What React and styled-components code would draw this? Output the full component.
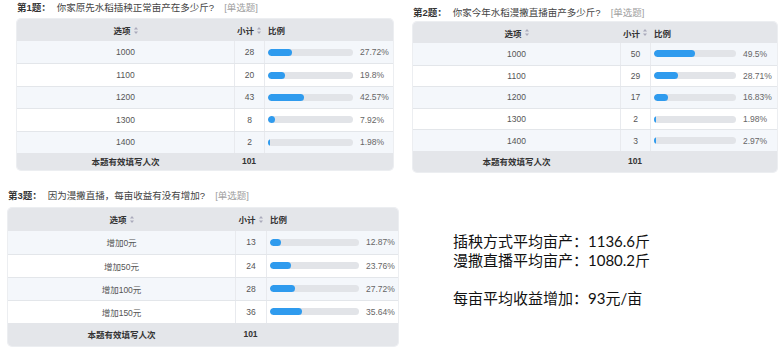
import React from "react";
import styled, { createGlobalStyle } from "styled-components";

const GlobalStyle = createGlobalStyle`
    html, body {
        margin: 0;
        padding: 0;
        background: #fff;
    }
    body {
        width: 780px;
        height: 352px;
        overflow: hidden;
        font-family: "Liberation Sans", "Noto Sans CJK SC", sans-serif;
    }
`;

const Page = styled.div`
    width: 780px;
    height: 352px;
    display: flex;
    flex-direction: column;
    padding-top: 2px;
    box-sizing: border-box;
`;

const Row = styled.div`
    display: flex;
    align-items: flex-start;
    padding-left: ${p => p.$left}px;
    margin-top: ${p => p.$top || 0}px;
`;

const Question = styled.div`
    width: ${p => p.$width}px;
    margin-top: ${p => p.$top || 0}px;
    margin-left: ${p => p.$left || 0}px;
    flex-shrink: 0;
`;

const Title = styled.div`
    height: 12px;
    line-height: 12px;
    font-size: 9.5px;
    color: #444;
    white-space: nowrap;
    margin-bottom: ${p => p.$gap}px;
`;

const TitleNo = styled.span`
    font-weight: bold;
    color: #333;
    margin-right: 6px;
`;

const TitleType = styled.span`
    color: #a0a0a0;
    margin-left: 10px;
`;

const Table = styled.div`
    border-radius: 4px;
    overflow: hidden;
    box-shadow: 0 0 0 1px #eceef1;
`;

const TableRow = styled.div`
    display: grid;
    grid-template-columns: ${p => p.$cols};
    height: ${p => p.$h}px;
    background: ${p => p.$bg};
    border-top: ${p => (p.$line ? "1px solid #e3e6ea" : "none")};
    box-sizing: border-box;
    font-size: 8.5px;
    color: #555;
`;

const Cell = styled.div`
    display: flex;
    align-items: center;
    justify-content: ${p => p.$align || "center"};
    padding-left: ${p => p.$pad || 0}px;
    border-left: ${p => (p.$divider ? "1px solid #e8eaee" : "none")};
    font-weight: ${p => (p.$bold ? "bold" : "normal")};
    color: ${p => (p.$bold ? "#333" : "inherit")};
    white-space: nowrap;
`;

const SortIcon = styled.svg`
    width: 4px;
    height: 7px;
    margin-left: 3px;
`;

const Track = styled.div`
    width: ${p => p.$w}px;
    height: 7px;
    border-radius: 4px;
    background: #e2e4e8;
    overflow: hidden;
    flex-shrink: 0;
`;

const Fill = styled.div`
    height: 100%;
    border-radius: 4px;
    background: #2f9bee;
`;

const Percent = styled.span`
    margin-left: 7px;
    color: #666;
`;

const Summary = styled.div`
    margin-top: 42px;
    margin-left: 55px;
    font-family: Lato, "Noto Sans CJK SC", sans-serif;
    font-size: 15px;
    line-height: 19px;
    color: #111;
    white-space: nowrap;
`;

const Blank = styled.div`
    height: 19px;
`;

const questions = [
    {
        no: 1,
        text: "你家原先水稻插秧正常亩产在多少斤?",
        cols: "217px 30px 1fr",
        bar: 85,
        heights: { head: 22, row: 22.4, foot: 17 },
        rows: [["1000", 28, 27.72], ["1100", 20, 19.8], ["1200", 43, 42.57], ["1300", 8, 7.92], ["1400", 2, 1.98]],
    },
    {
        no: 2,
        text: "你家今年水稻漫撒直播亩产多少斤?",
        cols: "207px 30px 1fr",
        bar: 82,
        heights: { head: 21, row: 21.6, foot: 21 },
        rows: [["1000", 50, 49.5], ["1100", 29, 28.71], ["1200", 17, 16.83], ["1300", 2, 1.98], ["1400", 3, 2.97]],
    },
    {
        no: 3,
        text: "因为漫撒直播，每亩收益有没有增加?",
        cols: "227px 31px 1fr",
        bar: 89,
        heights: { head: 23, row: 23, foot: 23 },
        rows: [["增加0元", 13, 12.87], ["增加50元", 24, 23.76], ["增加100元", 28, 27.72], ["增加150元", 36, 35.64]],
    },
];

const Sort = () => (
    <SortIcon viewBox="0 0 4 7">
        <path d="M2 0 L4 2.6 L0 2.6 Z" fill="#aab" />
        <path d="M2 7 L4 4.4 L0 4.4 Z" fill="#aab" />
    </SortIcon>
);

const ResultTable = ({ q }) => (
    <Table>
        <TableRow $cols={q.cols} $h={q.heights.head} $bg="#e4e6ea">
            <Cell $bold>选项<Sort /></Cell>
            <Cell $bold>小计<Sort /></Cell>
            <Cell $bold $align="flex-start" $pad={4}>比例</Cell>
        </TableRow>
        {q.rows.map(([label, count, pct], i) => (
            <TableRow key={label} $cols={q.cols} $h={q.heights.row} $bg={i % 2 === 0 ? "#f4f7fb" : "#fff"} $line={i > 0}>
                <Cell>{label}</Cell>
                <Cell $divider>{count}</Cell>
                <Cell $divider $align="flex-start" $pad={3}>
                    <Track $w={q.bar}>
                        <Fill style={{ width: `${Math.max(pct, 2)}%` }} />
                    </Track>
                    <Percent>{pct}%</Percent>
                </Cell>
            </TableRow>
        ))}
        <TableRow $cols={q.cols} $h={q.heights.foot} $bg="#e4e6ea">
            <Cell $bold>本题有效填写人次</Cell>
            <Cell $bold>101</Cell>
            <Cell />
        </TableRow>
    </Table>
);

const QuestionBlock = ({ q, gap }) => (
    <>
        <Title $gap={gap}>
            <TitleNo>第{q.no}题：</TitleNo>
            {q.text}
            <TitleType>[单选题]</TitleType>
        </Title>
        <ResultTable q={q} />
    </>
);

const App = () => (
    <Page>
        <GlobalStyle />
        <Row $left={17}>
            <Question $width={376}>
                <QuestionBlock q={questions[0]} gap={5} />
            </Question>
            <Question $width={364} $left={20} $top={5}>
                <QuestionBlock q={questions[1]} gap={3} />
            </Question>
        </Row>
        <Row $left={8} $top={18}>
            <Question $width={390}>
                <QuestionBlock q={questions[2]} gap={6} />
            </Question>
            <Summary>
                <div>插秧方式平均亩产：1136.6斤</div>
                <div>漫撒直播平均亩产：1080.2斤</div>
                <Blank />
                <div>每亩平均收益增加：93元/亩</div>
            </Summary>
        </Row>
    </Page>
);

export default App;
